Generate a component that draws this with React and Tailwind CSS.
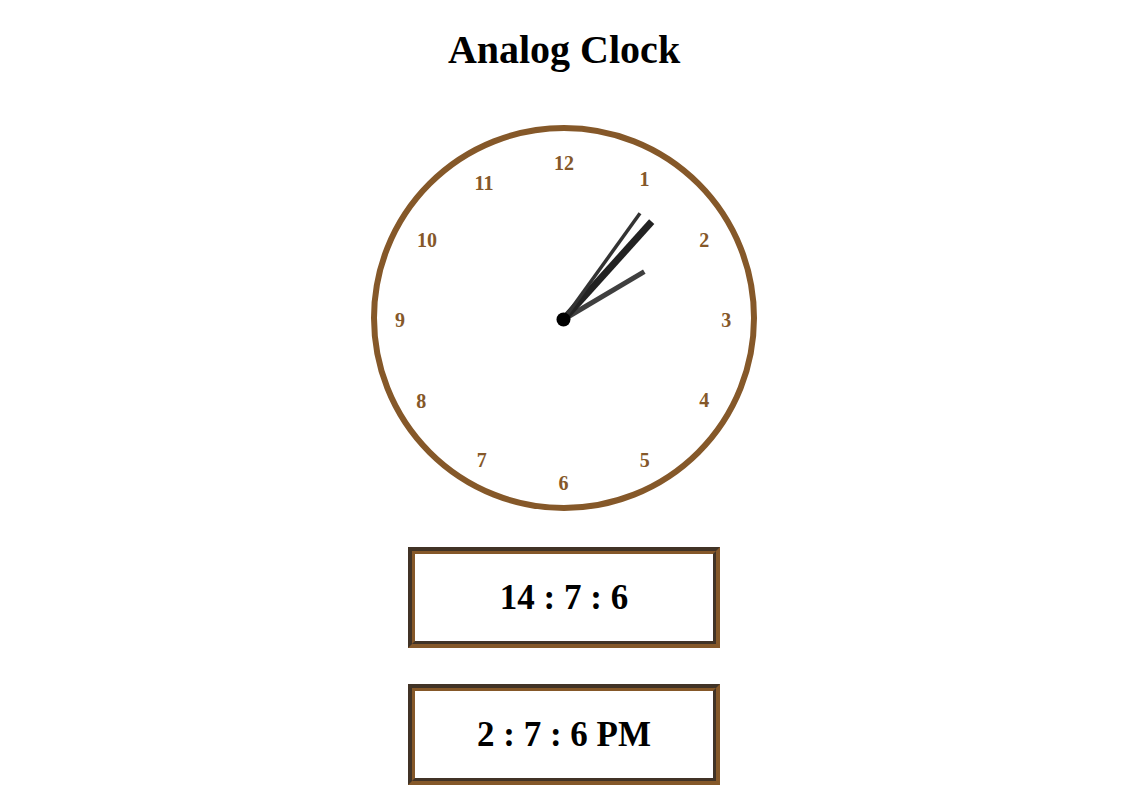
import React from 'react'

const numbers = [
  { n: 12, x: 193, y: 38.3 },
  { n: 1, x: 273.6, y: 53.8 },
  { n: 2, x: 333.3, y: 114.7 },
  { n: 3, x: 355.2, y: 194.7 },
  { n: 4, x: 333.3, y: 275 },
  { n: 5, x: 273.7, y: 335.5 },
  { n: 6, x: 192.5, y: 358 },
  { n: 7, x: 110.7, y: 335.5 },
  { n: 8, x: 50.3, y: 276.5 },
  { n: 9, x: 29, y: 194.7 },
  { n: 10, x: 56, y: 115.5 },
  { n: 11, x: 113, y: 57.8 },
]

function ClockFace() {
  const cx = 192.5
  const cy = 194.5
  return (
    <svg width="386" height="386" viewBox="0 0 386 386" className="block">
      <circle cx="193" cy="193" r="190" fill="white" stroke="#855829" strokeWidth="6" />
      {numbers.map((d) => (
        <text
          key={d.n}
          x={d.x}
          y={d.y + 6.8}
          textAnchor="middle"
          fill="#855829"
          fontSize="20"
          fontWeight="bold"
          fontFamily="'Liberation Serif', serif"
        >
          {d.n}
        </text>
      ))}
      {/* hour */}
      <line x1={cx} y1={cy} x2="273.3" y2="146.7" stroke="#3f3f3f" strokeWidth="5" />
      {/* minute */}
      <line x1={cx} y1={cy} x2="280.7" y2="96.7" stroke="#222222" strokeWidth="7" />
      {/* second */}
      <line x1={cx} y1={cy} x2="269" y2="88.3" stroke="#333333" strokeWidth="3.5" />
      <circle cx={cx} cy={cy} r="7" fill="black" />
    </svg>
  )
}

function TimeBox({ children }) {
  return (
    <div className="w-[312px] h-[101px] border-[4px] border-t-[#413326] border-l-[#413326] border-b-[#855829] border-r-[#855829]">
      <div className="h-full flex items-center justify-center border-[3px] border-t-[#855829] border-l-[#855829] border-b-[#413326] border-r-[#413326] bg-white">
        <span className="text-[35px] font-bold leading-[40px] text-black">{children}</span>
      </div>
    </div>
  )
}

export default function App() {
  return (
    <div
      className="w-[1128px] min-h-[802px] bg-white flex flex-col items-center pt-[27px]"
      style={{ fontFamily: "'Liberation Serif', serif" }}
    >
      <h1 className="text-[40px] font-bold leading-[46px] text-black">Analog Clock</h1>

      <div className="mt-[52px]">
        <ClockFace />
      </div>

      <div className="mt-[36px]">
        <TimeBox>14 : 7 : 6</TimeBox>
      </div>

      <div className="mt-[36px]">
        <TimeBox>2 : 7 : 6 PM</TimeBox>
      </div>
    </div>
  )
}
